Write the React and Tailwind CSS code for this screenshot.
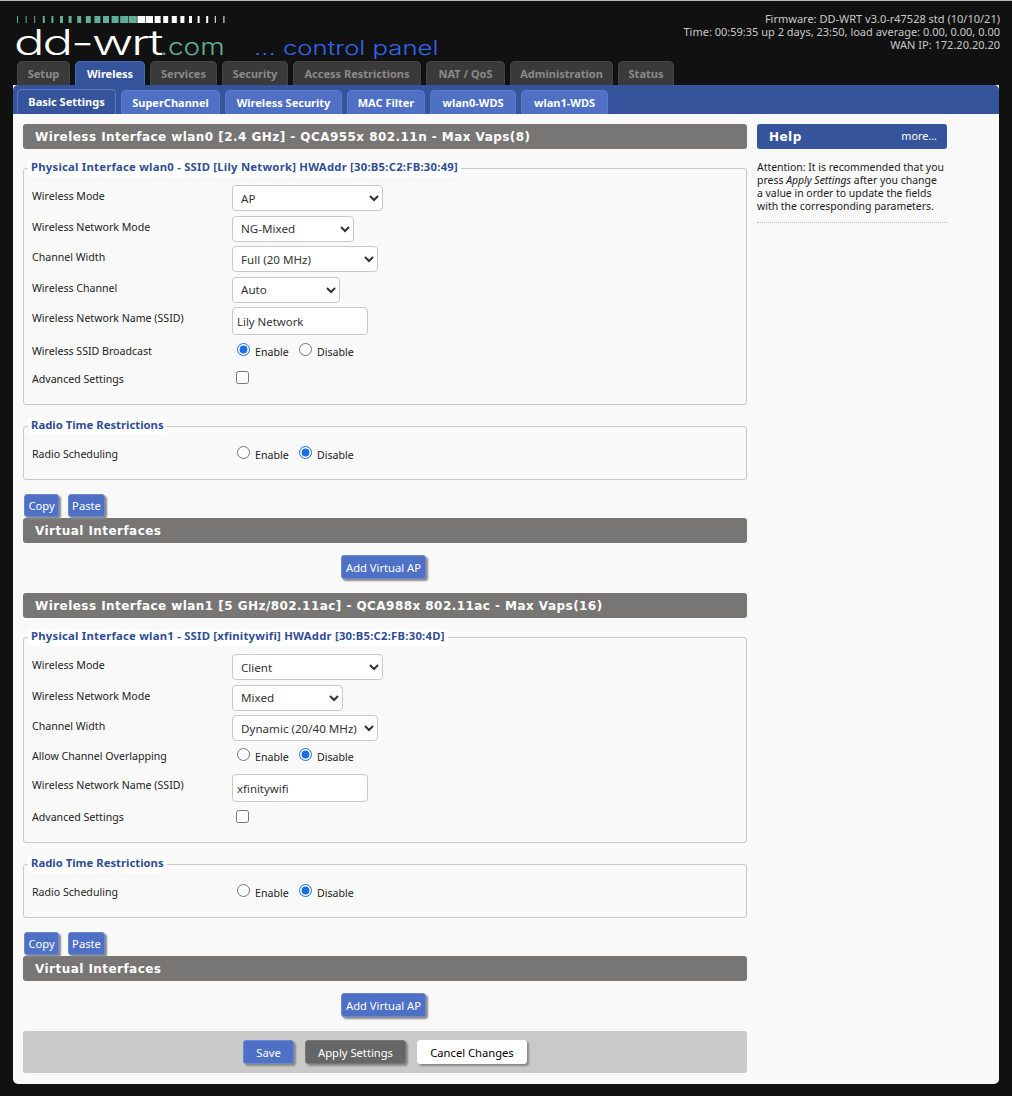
import React from 'react';

const mainTabs = [
  { name: 'Setup', w: 'w-[53px]' },
  { name: 'Wireless', w: 'w-[70px]', active: true },
  { name: 'Services', w: 'w-[67px]' },
  { name: 'Security', w: 'w-[66px]' },
  { name: 'Access Restrictions', w: 'w-[128px]' },
  { name: 'NAT / QoS', w: 'w-[79px]' },
  { name: 'Administration', w: 'w-[103px]' },
  { name: 'Status', w: 'w-[56px]' },
];

const subTabs = [
  { name: 'Basic Settings', w: 'w-[99px]', active: true },
  { name: 'SuperChannel', w: 'w-[99px]' },
  { name: 'Wireless Security', w: 'w-[117px]' },
  { name: 'MAC Filter', w: 'w-[78px]' },
  { name: 'wlan0-WDS', w: 'w-[86px]' },
  { name: 'wlan1-WDS', w: 'w-[87px]' },
];

const tickWidths = [1, 1, 1, 2, 2, 3, 3, 4, 5, 6, 6, 7, 8, 8, 8, 7, 6, 5, 5, 4, 3, 2, 2, 1, 1];

const Logo = () => (
  <svg width="450" height="60" className="block" style={{ fontFamily: 'Inter, sans-serif' }}>
    {tickWidths.map((w, i) => (
      <rect key={i} x={17 + i * 8.6} y="15" width={w} height="7" fill={i < 14 ? '#5fae96' : '#ffffff'} />
    ))}
    <text transform="translate(14 54) scale(1.45 1)" fontSize="35" fontWeight="300" letterSpacing="-1.4" fill="#fff">dd-wrt</text>
    <text transform="translate(160 54) scale(1.22 1)" fontSize="23" fontWeight="300" fill="#5fae96">.com</text>
    <text transform="translate(254 54) scale(1.285 1)" fontSize="20" fontWeight="300" fill="#2f66ea">... control panel</text>
  </svg>
);

const Bar = ({ children, className = '' }) => (
  <div className={`h-[25px] rounded-[3px] bg-[#787674] pl-3 text-[12px] font-bold leading-[26px] tracking-[0.45px] text-white font-['DejaVu_Sans',sans-serif] ${className}`}>
    {children}
  </div>
);

const Box = ({ title, track = '', children }) => (
  <fieldset className="rounded-[3px] border border-[#c8c8c8] px-2 pb-2">
    <legend className={`-ml-[4px] h-[17px] bg-white px-[3px] text-[11.3px] font-bold leading-[14px] text-[#2f4d95] ${track}`}>
      {title}
    </legend>
    {children}
  </fieldset>
);

const Row = ({ label, h, labelPad, children }) => (
  <div className={`flex ${h}`}>
    <div className={`w-[200px] shrink-0 leading-[15px] ${labelPad}`}>{label}</div>
    {children}
  </div>
);

const SelectRow = ({ label, value, w }) => (
  <Row label={label} h="h-[30.5px]" labelPad="pt-[4px]">
    <select defaultValue={value} className={`h-[26px] ${w} rounded-[4px] border border-[#c8c8c8] bg-white pl-[4px] text-[11.6px] text-[#333]`}>
      <option>{value}</option>
    </select>
  </Row>
);

const InputRow = ({ label, value }) => (
  <Row label={label} h="h-[34px]" labelPad="pt-[4px]">
    <input readOnly value={value} className="h-[28px] w-[136px] rounded-[4px] border border-[#c8c8c8] bg-white pl-[4px] text-[11.4px] text-[#333]" />
  </Row>
);

const RadioRow = ({ label, name, on, h = 'h-[28px]' }) => (
  <Row label={label} h={h} labelPad="pt-[3px]">
    <div className="flex items-start pl-[5px] pt-[2px] text-[#222]">
      <input type="radio" name={name} defaultChecked={on === 'Enable'} className="m-0 size-[13px] accent-[#1a6fe8]" />
      <span className="ml-[5px] mt-[2px] w-[44px] leading-[15px]">Enable</span>
      <input type="radio" name={name} defaultChecked={on === 'Disable'} className="m-0 size-[13px] accent-[#1a6fe8]" />
      <span className="ml-[5px] mt-[2px] leading-[15px]">Disable</span>
    </div>
  </Row>
);

const AdvancedRow = ({ h = 'h-[27px]', labelPad = 'pt-[3px]' }) => (
  <Row label="Advanced Settings" h={h} labelPad={labelPad}>
    <input type="checkbox" className="m-0 ml-[4px] mt-[2px] size-[13px]" />
  </Row>
);

const Btn = ({ children, className = 'bg-[#4e71c6] text-white' }) => (
  <button className={`h-full rounded-[3px] border border-[#6c86cc] pt-[2px] text-[11.2px] shadow-[2px_2px_2px_#888] ${className}`}>
    {children}
  </button>
);

const Interface = ({ header, legend, children, name }) => (
  <div>
    <Bar>{header}</Bar>
    <div className="mt-[11px]">
      <Box title={legend} track="tracking-[0.23px]">
        <div className="pt-[8px]">{children}</div>
      </Box>
    </div>
    <div className="mt-[13px]">
      <Box title="Radio Time Restrictions">
        <div className="pt-[9px]">
          <RadioRow label="Radio Scheduling" name={name} on="Disable" h="h-[27px]" />
        </div>
      </Box>
    </div>
    <div className="mt-[14px] flex h-[23px] gap-[9px] pl-[1px]">
      <Btn className="w-[35px] bg-[#4e71c6] text-white">Copy</Btn>
      <Btn className="w-[37px] bg-[#4e71c6] text-white">Paste</Btn>
    </div>
    <Bar className="mt-px">Virtual Interfaces</Bar>
    <div className="mt-[12px] flex h-[24px] justify-center pr-[3px]">
      <Btn className="w-[85px] bg-[#4e71c6] text-white">Add Virtual AP</Btn>
    </div>
  </div>
);

export default function App() {
  return (
    <div className="min-h-[1096px] border-t border-[#bbbbbb] bg-[#111111] text-[10.6px] text-[#222] font-['Noto_Sans',sans-serif]">
      <div className="flex h-[60px] justify-between pr-[12px]">
        <Logo />
        <div className="pt-[11px] text-right text-[11px] leading-[13px] text-[#c8c8c8]">
          <div>Firmware: DD-WRT v3.0-r47528 std (10/10/21)</div>
          <div>Time: 00:59:35 up 2 days, 23:50, load average: 0.00, 0.00, 0.00</div>
          <div>WAN IP: 172.20.20.20</div>
        </div>
      </div>

      <div className="flex h-[24px] gap-[5px] pl-[17px] text-[11px] font-bold">
        {mainTabs.map((tab) => (
          <div
            key={tab.name}
            className={`${tab.w} rounded-t-[5px] border border-b-0 text-center leading-[24px] ${
              tab.active ? 'border-[#4a68b4] bg-[#36549b] text-white' : 'border-[#444] bg-[#3a3a3a] text-[#8a8a8a]'
            }`}
          >
            {tab.name}
          </div>
        ))}
      </div>

      <div className="mx-[13px] rounded-b-[5px] bg-[#f9f9f9]">
        <div className="flex h-[29px] items-end gap-[5px] rounded-t-[5px] bg-[#36549b] pl-[4px] text-[11px] font-bold text-white">
          {subTabs.map((tab) => (
            <div
              key={tab.name}
              className={`${tab.w} rounded-t-[5px] border border-b-0 border-[#5a7acb] text-center ${
                tab.active ? 'h-[25px] bg-[#36549b] leading-[24px]' : 'h-[24px] bg-[#4f70c4] leading-[24px]'
              }`}
            >
              {tab.name}
            </div>
          ))}
        </div>

        <div className="flex gap-[10px] px-[10px] pb-[11px] pt-[10px]">
          <div className="w-[724px] shrink-0">
            <Interface
              name="sched0"
              header="Wireless Interface wlan0 [2.4 GHz] - QCA955x 802.11n - Max Vaps(8)"
              legend="Physical Interface wlan0 - SSID [Lily Network] HWAddr [30:B5:C2:FB:30:49]"
            >
              <SelectRow label="Wireless Mode" value="AP" w="w-[151px]" />
              <SelectRow label="Wireless Network Mode" value="NG-Mixed" w="w-[122px]" />
              <SelectRow label="Channel Width" value="Full (20 MHz)" w="w-[146px]" />
              <SelectRow label="Wireless Channel" value="Auto" w="w-[108px]" />
              <InputRow label="Wireless Network Name (SSID)" value="Lily Network" />
              <RadioRow label="Wireless SSID Broadcast" name="ssid0" on="Enable" />
              <AdvancedRow />
            </Interface>

            <div className="mt-[14px]">
              <Interface
                name="sched1"
                header="Wireless Interface wlan1 [5 GHz/802.11ac] - QCA988x 802.11ac - Max Vaps(16)"
                legend="Physical Interface wlan1 - SSID [xfinitywifi] HWAddr [30:B5:C2:FB:30:4D]"
              >
                <SelectRow label="Wireless Mode" value="Client" w="w-[151px]" />
                <SelectRow label="Wireless Network Mode" value="Mixed" w="w-[111px]" />
                <SelectRow label="Channel Width" value="Dynamic (20/40 MHz)" w="w-[146px]" />
                <RadioRow label="Allow Channel Overlapping" name="overlap1" on="Disable" h="h-[28.5px]" />
                <InputRow label="Wireless Network Name (SSID)" value="xfinitywifi" />
                <AdvancedRow h="h-[26px]" labelPad="pt-[2px]" />
              </Interface>
            </div>

            <div className="mt-[14px] flex h-[42px] items-center gap-[11px] rounded-[3px] bg-[#c9c9c9] pl-[220px]">
              <div className="h-[24px]">
                <Btn className="w-[51px] bg-[#4e71c6] text-white">Save</Btn>
              </div>
              <div className="h-[24px]">
                <Btn className="w-[101px] !border-[#777] bg-[#666666] text-white">Apply Settings</Btn>
              </div>
              <div className="h-[24px]">
                <Btn className="w-[110px] !border-white bg-white text-black">Cancel Changes</Btn>
              </div>
            </div>
          </div>

          <div className="w-[190px] shrink-0">
            <div className="flex h-[25px] items-center justify-between rounded-[3px] bg-[#36549b] pl-3 pr-[10px] text-white">
              <span className="font-['DejaVu_Sans',sans-serif] text-[12px] font-bold tracking-[0.45px]">Help</span>
              <span className="text-[10.8px]">more...</span>
            </div>
            <div className="mt-[12px] border-b border-dotted border-[#bbb] pb-[9px] pr-[2px] text-[10.45px] leading-[13px] text-[#222]">
              Attention: It is recommended that you press <i>Apply Settings</i> after you change a value in order to update the fields with the corresponding parameters.
            </div>
          </div>
        </div>
      </div>
    </div>
  );
}
